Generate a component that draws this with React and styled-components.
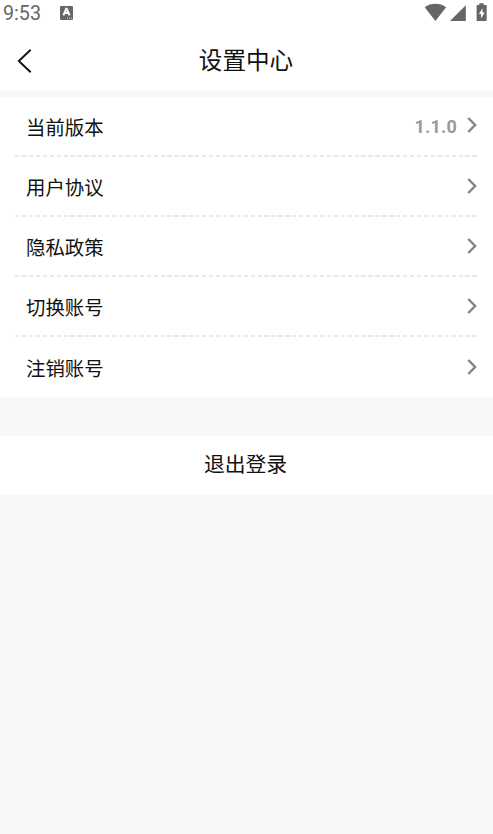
import styled, { createGlobalStyle } from 'styled-components';

const GlobalStyle = createGlobalStyle`
  * {
    box-sizing: border-box;
  }

  body {
    margin: 0;
    background: #f7f7f7;
    font-family: Roboto, 'Noto Sans CJK SC', sans-serif;
    color: #111111;
  }
`;

const Page = styled.div`
  display: flex;
  flex-direction: column;
  height: 100vh;
  overflow: hidden;
`;

const StatusBar = styled.div`
  height: 28px;
  padding: 0 5px 0 3px;
  display: flex;
  align-items: flex-start;
  background: #ffffff;
  color: #666666;

  svg {
    display: block;
    flex: none;
  }
`;

const Clock = styled.span`
  width: 57px;
  padding-top: 2px;
  font-size: 19.7px;
  line-height: 24px;
`;

const StatusIcons = styled.div`
  margin-left: auto;
`;

const NavBar = styled.header`
  height: 63px;
  padding: 0 18px 0 17px;
  display: grid;
  grid-template-columns: 20px 1fr 20px;
  align-items: center;
  background: #ffffff;
`;

const BackButton = styled.button`
  height: 28px;
  padding: 3px 0 0;
  border: 0;
  background: none;
  color: #111111;

  svg {
    display: block;
  }
`;

const Title = styled.h1`
  margin: 0;
  padding-top: 3px;
  font-size: 23.6px;
  font-weight: 400;
  line-height: 34px;
  text-align: center;
`;

const List = styled.main`
  margin-top: 6px;
  padding: 0 16px 0 14px;
  background: #ffffff;
`;

const Row = styled.div`
  height: 60px;
  padding: 0 0 1px 12px;
  display: flex;
  align-items: center;
  font-size: 19.4px;

  &:last-child {
    padding: 1px 0 0 12px;
  }

  &:not(:last-child) {
    background: repeating-linear-gradient(90deg, #e9e9e9 0 4.3px, #ffffff 4.3px 6.93px) 0.5px 58px /
      100% 2px no-repeat;
  }
`;

const Version = styled.span`
  margin: 0 10px 0 auto;
  color: #999999;
  font-size: 18px;
  font-weight: 700;
  letter-spacing: 0.2px;
`;

const Chevron = styled.svg`
  display: block;
  width: 10px;
  height: 18px;
  margin: ${(props) => (props.$raised ? '0 0 4px' : '0 0 1px auto')};
`;

const LogoutButton = styled.button`
  height: 59px;
  margin-top: 39px;
  padding: 0 2px 5px 0;
  border: 0;
  background: #ffffff;
  color: #111111;
  font-family: inherit;
  font-size: 20.8px;
`;

const items = [
  { label: '当前版本', value: '1.1.0' },
  { label: '用户协议' },
  { label: '隐私政策' },
  { label: '切换账号' },
  { label: '注销账号' },
];

function KeyboardIcon() {
  return (
    <svg width="14" height="22" viewBox="0 0 14 22">
      <rect x="0" y="6" width="13" height="14" rx="1.2" fill="currentColor" />
      <path d="M3.4 15.4 6.2 8.8h.6l2.8 6.6M4.6 13.1h3.8" fill="none" stroke="#fff" strokeWidth="2" />
      <path d="M7 18.2h5" stroke="#ddd" strokeWidth="1" strokeDasharray="1 1" />
    </svg>
  );
}

function SystemIcons() {
  return (
    <svg width="64" height="24" viewBox="0 0 64 24" fill="currentColor">
      <path d="M.7 7.3C3.8 4.8 7.5 3.8 11.4 3.8s7.6 1 10.7 3.5L11.4 21z" />
      <path d="M41.8 5.3V21H26z" />
      <path
        fillRule="evenodd"
        d="M55.3 3.2h4.4v1.9h2c.6 0 1 .4 1 1v13.9c0 .6-.4 1-1 1h-8.1c-.6 0-1-.4-1-1V6.1c0-.6.4-1 1-1h1.7zM58.5 8.2l-3.6 5.8h2.2v4.5l3.6-6h-2.2z"
      />
    </svg>
  );
}

export default function App() {
  return (
    <Page>
      <GlobalStyle />
      <StatusBar>
        <Clock>9:53</Clock>
        <KeyboardIcon />
        <StatusIcons>
          <SystemIcons />
        </StatusIcons>
      </StatusBar>
      <NavBar>
        <BackButton aria-label="返回">
          <svg width="16" height="24" viewBox="0 0 16 24" fill="none">
            <path d="M13.7.8 1.8 12 13.7 23.2" stroke="currentColor" strokeWidth="1.9" />
          </svg>
        </BackButton>
        <Title>设置中心</Title>
      </NavBar>
      <List>
        {items.map(({ label, value }) => (
          <Row key={label}>
            {label}
            {value && <Version>{value}</Version>}
            <Chevron $raised={!!value} viewBox="0 0 10 18" fill="none">
              <path d="M1.3 2 8.1 9 1.3 16" stroke="#858585" strokeWidth="2.5" />
            </Chevron>
          </Row>
        ))}
      </List>
      <LogoutButton>退出登录</LogoutButton>
    </Page>
  );
}
